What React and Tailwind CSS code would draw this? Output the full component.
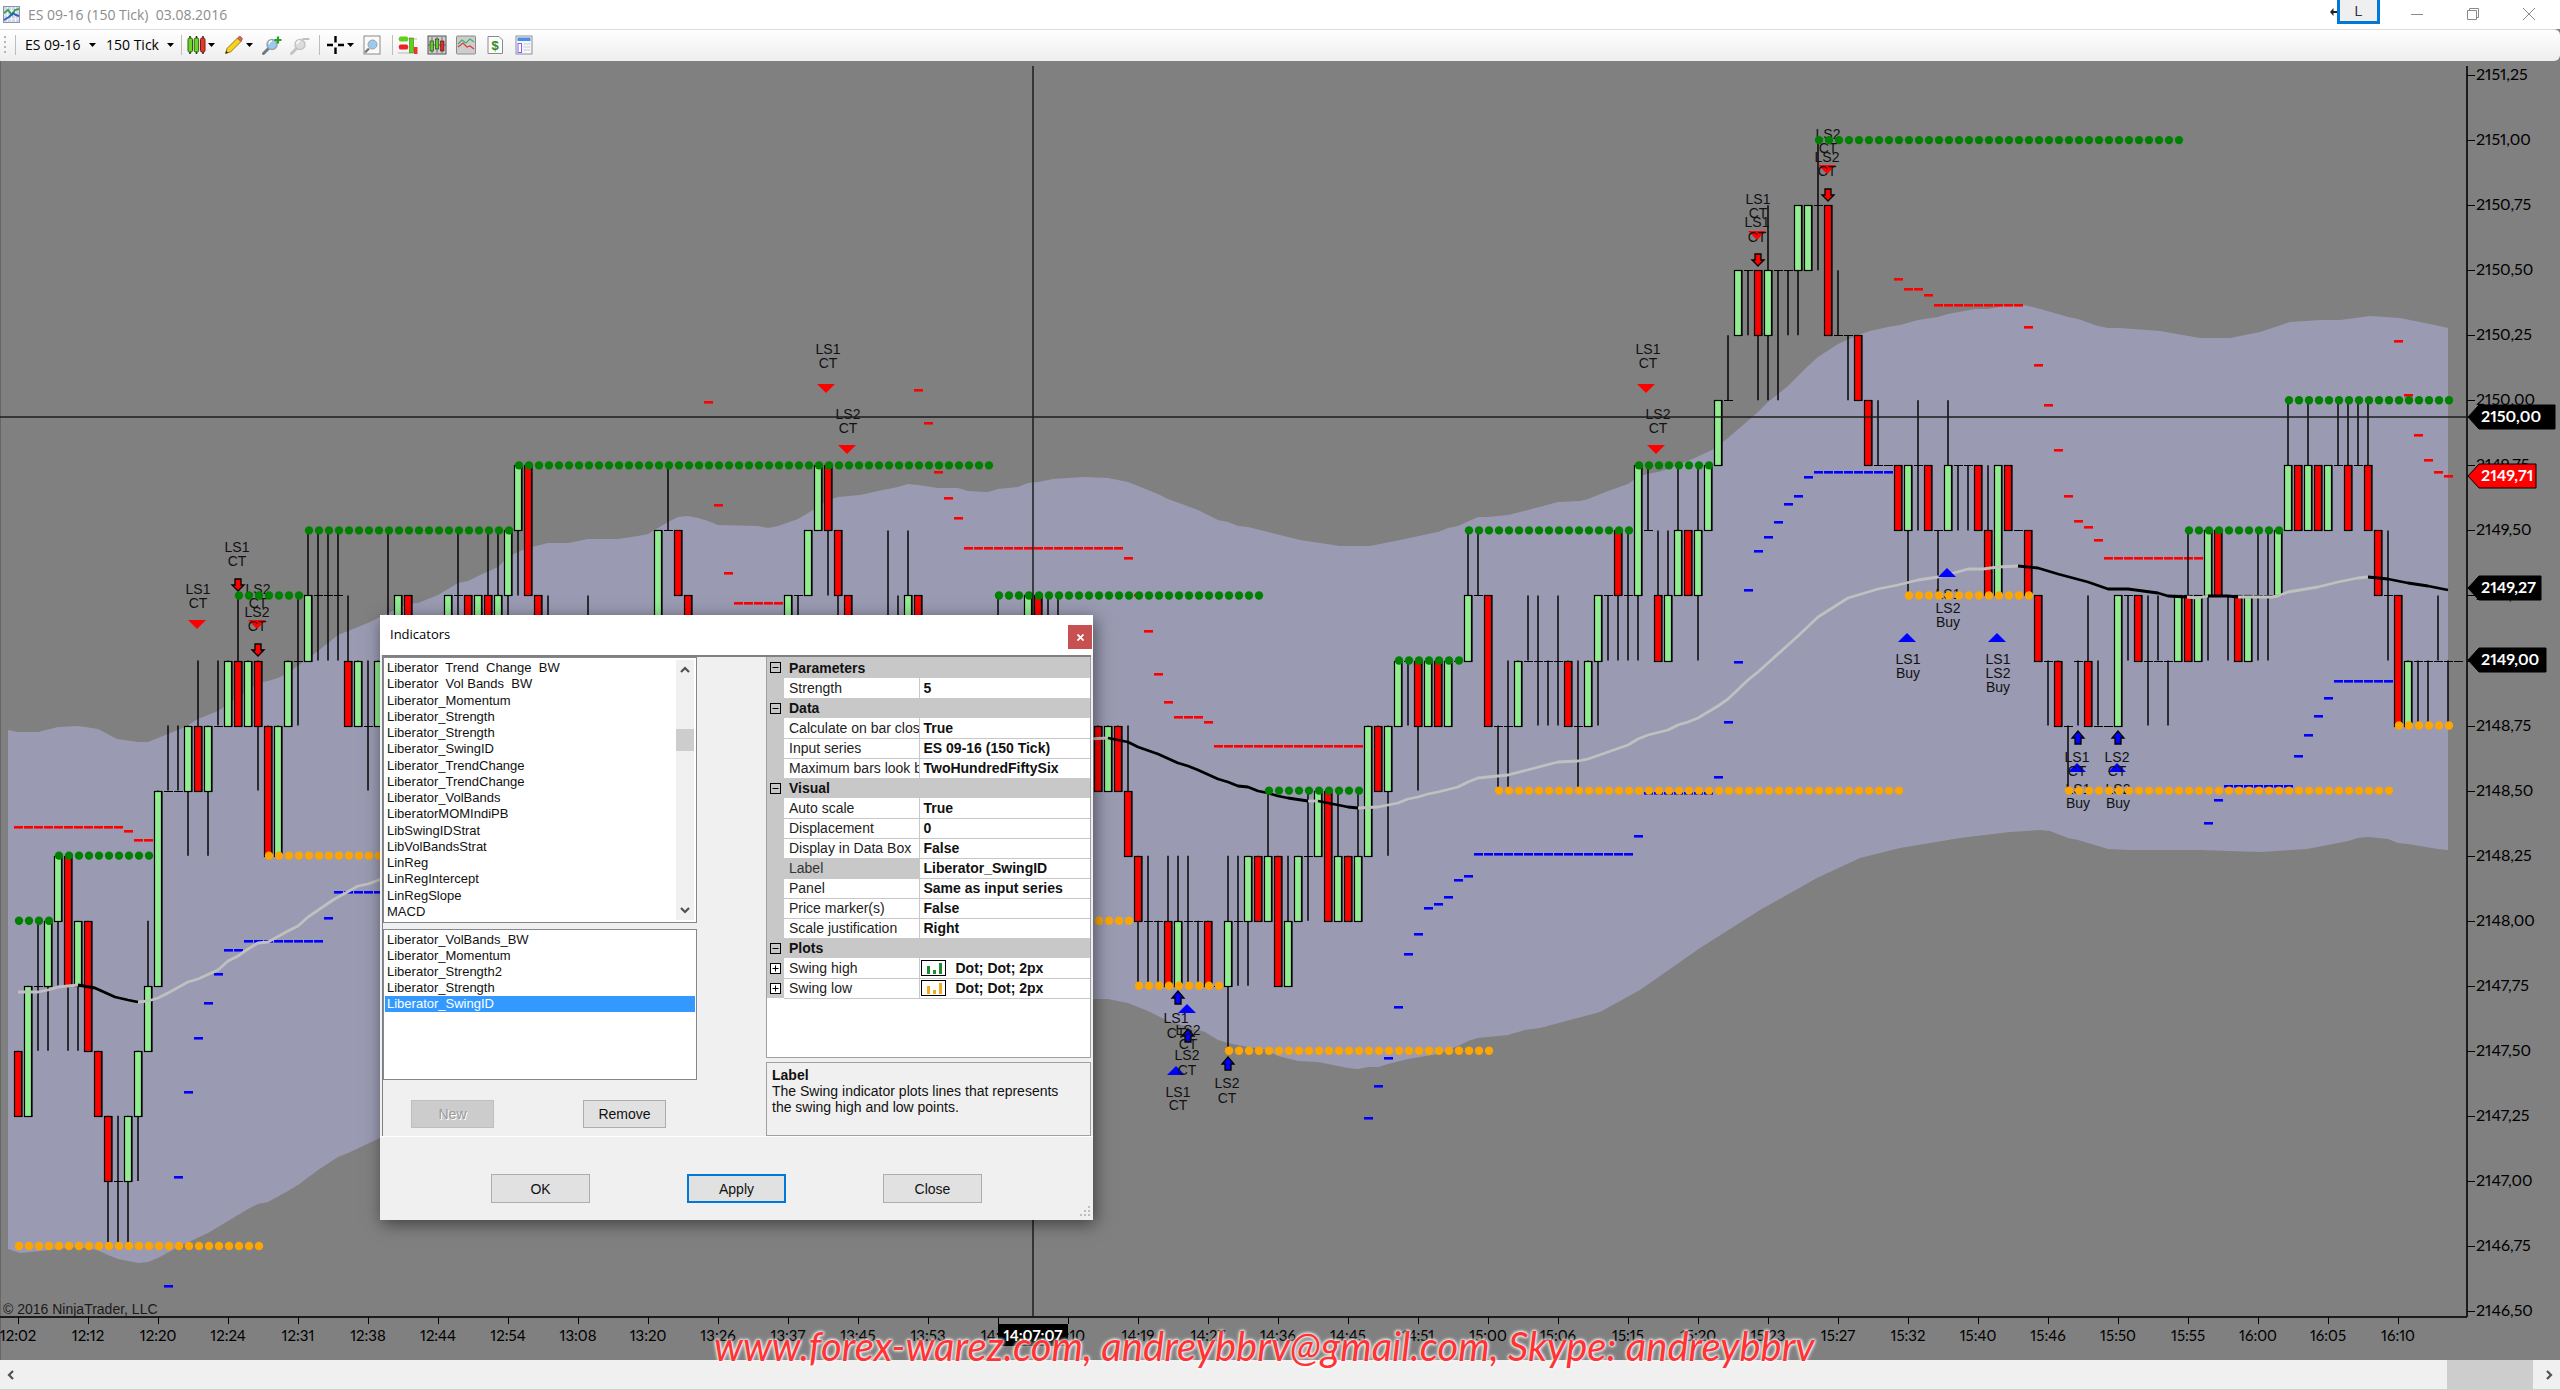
import React from "react";

const STEP = 10;
const X0 = 18;
const px = (i) => X0 + STEP * i;
const py = (level) => 1311 - 65.05 * level;

/* bar: [index, high, low, open, close] in quarter-point levels above 2146.50 */
const BARS = [
  [0, 4, 3, 4, 3], [1, 5, 3, 3, 5], [2, 6, 4, 5, 5], [3, 6, 4, 5, 6], [4, 7, 5, 6, 7], [5, 7, 4, 7, 5], [6, 6, 4, 5, 6],
  [7, 6, 4, 6, 4], [8, 4, 3, 4, 3], [9, 3, 1, 3, 2], [10, 3, 1, 2, 2], [11, 3, 1, 2, 3], [12, 4, 2, 3, 4], [13, 6, 4, 4, 5],
  [14, 8, 5, 5, 8], [15, 9, 8, 8, 8], [16, 9, 8, 8, 8], [17, 9, 7, 8, 9], [18, 10, 8, 9, 8], [19, 9, 7, 8, 9], [20, 10, 9, 9, 9],
  [21, 10, 9, 9, 10], [22, 11, 9, 10, 9], [23, 10, 9, 9, 10], [24, 10, 8, 10, 9], [25, 9, 7, 9, 7], [26, 9, 7, 7, 9],
  [27, 10, 9, 9, 10], [28, 11, 9, 10, 10], [29, 12, 10, 10, 11], [30, 12, 10, 11, 11], [31, 12, 10, 11, 11], [32, 12, 10, 11, 11],
  [33, 11, 9, 10, 9], [34, 10, 9, 9, 10], [35, 10, 8, 9, 9], [36, 10, 9, 9, 10], [37, 12, 9, 10, 10], [38, 11, 10, 10, 11],
  [39, 11, 10, 11, 10], [43, 11, 10, 10, 11], [44, 12, 10, 11, 11], [45, 11, 10, 11, 10], [46, 11, 10, 10, 11],
  [47, 12, 10, 11, 10], [48, 12, 10, 10, 11], [49, 12, 10, 11, 12], [50, 13, 11, 12, 13], [51, 13, 11, 13, 11], [52, 11, 10, 11, 10],
  [53, 11, 10, 10, 10], [57, 11, 10, 10, 10], [64, 12, 10, 10, 12], [65, 13, 12, 12, 12], [66, 12, 11, 12, 11], [67, 11, 10, 11, 10],
  [77, 11, 10, 10, 11], [78, 11, 10, 11, 11], [79, 12, 11, 11, 12], [80, 13, 12, 12, 13], [81, 13, 11, 13, 12], [82, 12, 10, 12, 11],
  [83, 11, 10, 11, 10], [87, 12, 10, 10, 10], [88, 11, 10, 10, 10], [89, 12, 10, 10, 11], [90, 11, 10, 11, 10], [98, 11, 10, 10, 10],
  [101, 11, 10, 10, 11], [102, 11, 10, 11, 10], [103, 11, 10, 10, 10], [104, 11, 10, 10, 10],
  [108, 9, 8, 9, 8], [109, 9, 8, 8, 9], [110, 9, 8, 9, 8], [111, 9, 7, 8, 7], [112, 7, 5, 7, 6], [113, 7, 5, 6, 6], [114, 6, 5, 6, 6],
  [115, 7, 5, 6, 5], [116, 7, 5, 5, 6], [117, 7, 5, 6, 6], [118, 6, 5, 6, 6], [119, 6, 5, 6, 5], [120, 5, 5, 5, 5], [121, 7, 4, 5, 6],
  [122, 7, 5, 6, 6], [123, 7, 5, 6, 7], [124, 7, 6, 7, 6], [125, 8, 6, 6, 7], [126, 7, 5, 7, 5], [127, 7, 5, 5, 6], [128, 7, 6, 6, 7],
  [129, 8, 6, 7, 7], [130, 8, 7, 7, 8], [131, 8, 6, 8, 6], [132, 8, 6, 6, 7], [133, 7, 6, 7, 6], [134, 8, 6, 6, 7], [135, 9, 7, 7, 9],
  [136, 9, 8, 9, 8], [137, 9, 7, 8, 9], [138, 10, 9, 9, 10], [139, 10, 9, 10, 10], [140, 10, 8, 10, 9], [141, 10, 9, 9, 10],
  [142, 10, 9, 10, 9], [143, 10, 9, 9, 10], [144, 10, 10, 10, 10], [145, 12, 10, 10, 11], [146, 12, 11, 11, 11], [147, 11, 9, 11, 9],
  [148, 9, 8, 9, 9], [149, 10, 8, 9, 9], [150, 10, 9, 9, 10], [151, 11, 10, 10, 10], [152, 11, 9, 10, 10], [153, 10, 9, 10, 10],
  [154, 11, 9, 10, 10], [155, 10, 9, 10, 9], [156, 10, 8, 9, 9], [157, 10, 9, 9, 10], [158, 11, 9, 10, 11], [159, 11, 10, 11, 11],
  [160, 12, 10, 12, 11], [161, 12, 10, 11, 11], [162, 13, 10, 11, 13], [163, 13, 12, 12, 12], [164, 12, 10, 11, 10],
  [165, 12, 10, 10, 11], [166, 13, 11, 11, 12], [167, 12, 11, 12, 11], [168, 13, 10, 11, 12], [169, 13, 12, 12, 13],
  [170, 14, 13, 13, 14], [171, 15, 14, 14, 14], [172, 16, 15, 15, 16], [173, 16, 15, 16, 16], [174, 16, 14, 16, 15],
  [175, 17, 14, 15, 16], [176, 16, 14, 16, 16], [177, 16, 15, 16, 16], [178, 17, 15, 16, 17], [179, 17, 16, 16, 17],
  [180, 18, 16, 17, 17], [181, 17, 15, 17, 15], [182, 16, 15, 15, 15], [183, 15, 14, 15, 15], [184, 15, 14, 15, 14],
  [185, 14, 13, 14, 13], [186, 14, 13, 13, 13], [187, 13, 13, 13, 13], [188, 13, 12, 13, 12], [189, 13, 11, 12, 13],
  [190, 14, 12, 13, 13], [191, 13, 12, 13, 12], [192, 12, 11, 12, 12], [193, 14, 12, 12, 13], [194, 13, 12, 13, 13],
  [195, 13, 12, 13, 13], [196, 13, 12, 13, 12], [197, 13, 11, 12, 11], [198, 13, 11, 11, 13], [199, 13, 12, 13, 12],
  [200, 12, 12, 12, 12], [201, 12, 11, 12, 11], [202, 11, 10, 11, 10], [203, 10, 9, 10, 10], [204, 10, 9, 10, 9], [205, 9, 8, 9, 9],
  [206, 10, 9, 10, 10], [207, 11, 9, 10, 9], [208, 10, 9, 9, 9], [209, 9, 9, 9, 9], [210, 11, 9, 9, 11], [211, 11, 10, 11, 11],
  [212, 11, 10, 11, 10], [213, 11, 9, 10, 10], [214, 11, 10, 10, 10], [215, 10, 9, 10, 10], [216, 11, 10, 10, 11],
  [217, 12, 10, 11, 10], [218, 11, 10, 10, 11], [219, 12, 10, 11, 12], [220, 12, 11, 12, 11], [221, 11, 10, 11, 11],
  [222, 11, 10, 11, 10], [223, 11, 10, 10, 11], [224, 12, 10, 11, 11], [225, 12, 10, 11, 11], [226, 12, 11, 11, 12],
  [227, 14, 12, 12, 13], [228, 13, 12, 13, 12], [229, 14, 12, 12, 13], [230, 13, 12, 13, 12], [231, 13, 12, 12, 13],
  [232, 14, 13, 13, 13], [233, 14, 12, 13, 12], [234, 14, 13, 13, 13], [235, 14, 12, 13, 12], [236, 12, 11, 12, 11],
  [237, 12, 10, 11, 11], [238, 11, 9, 11, 9], [239, 10, 9, 9, 10], [240, 10, 9, 10, 10], [241, 10, 9, 10, 10],
  [242, 11, 10, 10, 10], [243, 10, 9, 10, 10], [244, 10, 10, 10, 10],
];

/* swing runs: [level, first index, last index] */
const SWING_HIGH = [
  [6, 0, 3], [7, 4, 13], [11, 22, 28], [12, 29, 49], [13, 50, 97], [11, 98, 124], [8, 125, 134], [10, 138, 144],
  [12, 145, 161], [13, 162, 169], [18, 180, 216], [12, 217, 226], [14, 227, 243],
];
const SWING_LOW = [
  [1, 0, 24], [7, 25, 40], [6, 100, 111], [5, 112, 120], [4, 121, 147], [8, 148, 188], [11, 189, 201], [8, 205, 237], [9, 238, 243],
];

/* stop dashes: [y, first index, last index] */
const STOP_RED = [
  [827, 0, 10], [831, 11, 11], [840, 12, 13], [402, 69, 69], [505, 70, 70], [573, 71, 71], [603, 72, 76], [390, 90, 90], [423, 91, 91],
  [472, 92, 92], [498, 93, 93], [518, 94, 94], [548, 95, 110], [558, 111, 111], [595, 112, 112], [631, 113, 113], [674, 114, 114],
  [702, 115, 115], [717, 116, 118], [722, 119, 119], [746, 120, 134], [279, 188, 188], [289, 189, 190], [295, 191, 191],
  [305, 192, 200], [327, 201, 201], [365, 202, 202], [405, 203, 203], [450, 204, 204], [496, 205, 205], [521, 206, 206],
  [527, 207, 207], [540, 208, 208], [558, 209, 218], [341, 238, 238], [395, 239, 239], [435, 240, 240], [460, 241, 241],
  [472, 242, 242], [476, 243, 243],
];
const STOP_BLUE = [
  [1286, 15, 15], [1177, 16, 16], [1092, 17, 17], [1038, 18, 18], [1003, 19, 19], [974, 20, 20], [950, 21, 22], [941, 23, 30],
  [918, 31, 31], [892, 32, 40], [1118, 135, 135], [1086, 136, 136], [1058, 137, 137], [1007, 138, 138], [954, 139, 139],
  [934, 140, 140], [908, 141, 141], [904, 142, 142], [897, 143, 143], [880, 144, 144], [876, 145, 145], [854, 146, 161],
  [836, 162, 162], [793, 163, 169], [777, 170, 170], [722, 171, 171], [662, 172, 172], [590, 173, 173], [551, 174, 174],
  [537, 175, 175], [522, 176, 176], [504, 177, 177], [496, 178, 178], [477, 179, 179], [472, 180, 187], [823, 219, 219],
  [800, 220, 220], [786, 221, 227], [756, 228, 228], [735, 229, 229], [716, 230, 230], [698, 231, 231], [681, 232, 237],
];

const BAND_TOP =
  "8,730 18,732 38,732 58,727 78,726 98,729 117,739 138,742 148,742 168,734 185,727 198,719 218,711 247,691 258,683 268,681 278,678 288,673 318,651 338,635 348,631 370,622 388,613 408,604 418,603 438,595 458,583 468,581 478,576 498,567 508,557 518,552 528,548 548,543 568,543 588,539 618,539 638,536 648,534 658,528 668,522 678,517 688,516 698,518 708,521 718,525 758,526 768,528 778,526 798,519 818,507 828,500 838,497 860,495 878,491 898,487 908,484 918,485 938,488 958,488 968,491 988,492 998,489 1018,487 1028,483 1038,482 1053,479 1083,477 1108,478 1128,482 1158,494 1168,499 1198,510 1218,520 1228,522 1238,526 1248,527 1260,530 1300,540 1340,546 1370,546 1400,540 1428,534 1438,532 1448,528 1458,526 1478,517 1488,517 1508,515 1528,510 1558,502 1580,501 1588,499 1608,491 1628,484 1638,477 1647,474 1658,472 1668,469 1688,461 1712,450 1728,438 1758,412 1768,402 1788,386 1808,366 1818,357 1838,344 1858,335 1870,331 1888,327 1900,325 1918,320 1938,317 1948,314 1975,309 1988,309 2003,306 2023,305 2033,307 2058,314 2068,317 2078,319 2098,326 2108,328 2120,328 2160,331 2200,338 2230,338 2260,332 2290,322 2320,320 2340,320 2370,316 2400,318 2430,324 2448,328";
const BAND_BOTTOM =
  "2448,850 2438,849 2408,844 2398,843 2388,839 2378,838 2368,837 2358,838 2348,841 2328,845 2307,849 2260,852 2200,850 2130,850 2108,849 2088,843 2078,840 2068,838 2050,831 2040,830 2010,832 1960,838 1900,848 1860,858 1817,878 1760,910 1700,948 1640,990 1600,1012 1540,1028 1525,1030 1508,1035 1478,1038 1468,1041 1458,1046 1438,1054 1408,1059 1388,1064 1378,1067 1368,1067 1358,1069 1348,1068 1318,1062 1298,1061 1278,1056 1263,1049 1248,1047 1228,1043 1218,1040 1205,1032 1168,1021 1148,1011 1128,1003 1108,999 1093,999 900,1010 600,1050 380,1138 348,1153 338,1157 318,1170 298,1185 288,1191 268,1202 258,1204 248,1209 228,1221 208,1233 178,1247 158,1258 148,1262 138,1263 118,1259 108,1255 97,1250 78,1247 58,1249 40,1251 20,1253 8,1249";

const AVG_LIGHT = [
  "18,992 38,992 48,990 58,987 78,985",
  "138,1002 148,1001 158,998 168,993 188,982 198,979 218,970 228,961 238,956 248,949 258,943 268,942 288,931 298,926 308,917 333,900 358,886 368,884 384,878",
  "1088,739 1108,738",
  "1308,801 1318,801",
  "1358,808 1378,807 1398,803 1408,799 1418,797 1428,794 1438,792 1458,787 1468,782 1478,778 1508,775 1558,762 1578,761 1588,759 1608,752 1628,745 1638,739 1648,735 1668,730 1678,725 1688,722 1698,718 1718,706 1728,699 1748,680 1758,672 1788,645 1798,636 1818,617 1848,598 1858,595 1878,589 1898,585 1918,580 1938,577 1950,574 1968,569 1983,569 1998,567 2018,566",
  "2187,597 2198,598 2208,596",
  "2238,597 2272,597 2278,596 2288,592 2318,587 2338,582 2358,578 2368,577",
];
const AVG_DARK = [
  "78,985 95,988 115,997 128,1000 138,1002",
  "1108,738 1118,740 1128,742 1138,747 1158,754 1178,763 1188,766 1198,770 1218,779 1228,782 1238,786 1248,787 1258,791 1268,793 1278,796 1288,798 1308,801",
  "1318,801 1328,803 1338,805 1348,807 1358,808",
  "2018,566 2038,568 2048,571 2058,574 2088,582 2108,589 2128,589 2158,593 2168,596 2187,597",
  "2208,596 2228,596 2238,597",
  "2368,577 2388,579 2408,583 2428,586 2448,590",
];

/* signal labels: [text, centre x, centre y] */
const LABELS = [
  ["LS1", 198, 589], ["CT", 198, 603], ["LS1", 237, 547], ["CT", 237, 561], ["LS2", 258, 589], ["CT", 258, 603],
  ["LS2", 257, 612], ["CT", 257, 626], ["LS1", 828, 349], ["CT", 828, 363], ["LS2", 848, 414], ["CT", 848, 428],
  ["LS1", 1648, 349], ["CT", 1648, 363], ["LS2", 1658, 414], ["CT", 1658, 428], ["LS1", 1758, 199], ["CT", 1758, 213],
  ["LS1", 1757, 222], ["CT", 1757, 237], ["LS2", 1828, 134], ["CT", 1828, 148], ["LS2", 1827, 157], ["CT", 1827, 171],
  ["LS1", 1948, 594], ["LS2", 1948, 608], ["Buy", 1948, 622], ["LS1", 1908, 659], ["Buy", 1908, 673], ["LS1", 1998, 659],
  ["LS2", 1998, 673], ["Buy", 1998, 687], ["LS1", 2077, 757], ["CT", 2077, 771], ["LS1", 2078, 789], ["Buy", 2078, 803],
  ["LS2", 2117, 757], ["CT", 2117, 771], ["LS2", 2118, 789], ["Buy", 2118, 803], ["LS1", 1176, 1018], ["CT", 1176, 1033],
  ["LS2", 1188, 1030], ["CT", 1188, 1044], ["LS2", 1187, 1055], ["CT", 1187, 1070], ["LS1", 1178, 1092], ["CT", 1178, 1105],
  ["LS2", 1227, 1083], ["CT", 1227, 1098],
];
const TRI_DOWN = [[197, 620], [257, 620], [826, 384], [847, 445], [1646, 384], [1656, 445], [1757, 231], [1827, 165]];
const TRI_UP = [[1947, 577], [1907, 642], [1997, 642], [2077, 772], [2117, 772], [1187, 1013], [1176, 1075]];
const ARROW_DOWN = [[238, 591], [258, 656], [1758, 266], [1828, 201]];
const ARROW_UP = [[2078, 731], [2118, 731], [1178, 991], [1188, 1029], [1228, 1057]];

const TIMES = "12:02 12:12 12:20 12:24 12:31 12:38 12:44 12:54 13:08 13:20 13:26 13:37 13:45 13:53 14:01 14:10 14:19 14:27 14:36 14:45 14:51 15:00 15:06 15:15 15:20 15:23 15:27 15:32 15:40 15:46 15:50 15:55 16:00 16:05 16:10".split(" ");

const priceText = (level) => (2146.5 + level * 0.25).toFixed(2).replace(".", ",");

function Candle({ bar }) {
  const [i, high, low, open, close] = bar;
  const x = px(i);
  const top = Math.round(py(Math.max(open, close)));
  const bottom = Math.round(py(Math.min(open, close)));
  return (
    <g>
      {high !== low && <line x1={x} x2={x} y1={py(high)} y2={py(low)} stroke="#000" strokeOpacity="0.72" strokeWidth="2" />}
      {open === close ? (
        <line x1={x - 4} x2={x + 5} y1={top + 0.5} y2={top + 0.5} stroke="#000" strokeWidth="1" />
      ) : (
        <>
          <rect x={x + 3} y={top} width="2" height={bottom - top + 1} fill="#000" fillOpacity="0.6" />
          <rect x={x - 3.5} y={top + 0.5} width="7" height={bottom - top} fill={close > open ? "#90ee90" : "#ff0000"} stroke="#000" strokeWidth="1.2" />
        </>
      )}
    </g>
  );
}

function Dots({ runs, color }) {
  return runs.map(([level, a, b]) =>
    Array.from({ length: b - a + 1 }, (_, k) => (
      <circle key={level + "-" + (a + k)} cx={px(a + k) + 1} cy={py(level)} r="4.2" fill={color} />
    ))
  );
}

function Dashes({ runs, color }) {
  return runs.map(([y, a, b]) =>
    Array.from({ length: b - a + 1 }, (_, k) => (
      <rect key={y + "-" + (a + k)} x={px(a + k) - 4} y={y - 1} width="9" height="2.6" fill={color} />
    ))
  );
}

function PriceTag({ y, right, fill, children }) {
  return (
    <g>
      <path d={`M2468 ${y} L2479 ${y - 12} H${right} V${y + 12} H2479 Z`} fill={fill} stroke="#000" />
      <text x="2481" y={y + 5} fontSize="16" fontWeight="700" fill="#fff" className="font-['Lato',sans-serif] proportional-nums">
        {children}
      </text>
    </g>
  );
}

function Chart() {
  return (
    <svg viewBox="0 61 2560 1299" className="block h-full w-full" role="img" aria-label="ES 09-16 150 tick price chart">
      <rect x="0" y="61" width="2560" height="1299" fill="#808080" />
      <rect x="0" y="61" width="1" height="1299" fill="#666" />
      <polygon points={BAND_TOP + " " + BAND_BOTTOM} fill="#9a9ab2" />
      <Dashes runs={STOP_RED} color="#ff0000" />
      {BARS.map((b) => (
        <Candle key={b[0]} bar={b} />
      ))}
      <Dashes runs={STOP_BLUE} color="#0000ff" />
      <g fill="none" strokeWidth="2.8" strokeLinejoin="round">
        {AVG_LIGHT.map((p) => (
          <polyline key={p} points={p} stroke="#c0c0c0" />
        ))}
        {AVG_DARK.map((p) => (
          <polyline key={p} points={p} stroke="#000" />
        ))}
      </g>
      {ARROW_DOWN.map(([x, y]) => (
        <path key={x + "d" + y} d={`M${x} ${y} l-6 -6 h3 v-6 h6 v6 h3 z`} fill="#f00" stroke="#000" strokeWidth="1.3" />
      ))}
      {ARROW_UP.map(([x, y]) => (
        <path key={x + "u" + y} d={`M${x} ${y} l-6 7 h3 v6 h6 v-6 h3 z`} fill="#00f" stroke="#000" strokeWidth="1.3" />
      ))}
      {TRI_DOWN.map(([x, y]) => (
        <path key={x + "t" + y} d={`M${x - 9} ${y} h18 l-9 9 z`} fill="#f00" />
      ))}
      {TRI_UP.map(([x, y]) => (
        <path key={x + "t" + y} d={`M${x - 9} ${y} h18 l-9 -9 z`} fill="#00f" />
      ))}
      <g fontSize="14" textAnchor="middle" fill="#111" className="font-['Liberation_Sans',Arial,sans-serif]">
        {LABELS.map(([t, x, y]) => (
          <text key={t + x + "-" + y} x={x} y={y + 5}>
            {t}
          </text>
        ))}
      </g>
      <Dots runs={SWING_LOW} color="#ffa500" />
      <Dots runs={SWING_HIGH} color="#008000" />

      <g stroke="#1c1c1c">
        <line x1="0" x2="2467" y1="417" y2="417" strokeWidth="1.5" />
        <line x1="1033" x2="1033" y1="66" y2="1317" strokeWidth="1.5" />
        <line x1="2467" x2="2467" y1="66" y2="1317" strokeWidth="2" />
        <line x1="0" x2="2467" y1="1317" y2="1317" strokeWidth="2" />
      </g>
      <g fontSize="16" fill="#000" className="font-['Lato',sans-serif] proportional-nums">
        {Array.from({ length: 20 }, (_, l) => (
          <g key={l}>
            <rect x="2467" y={Math.round(py(l))} width="8" height="1" />
            <text x="2476" y={Math.round(py(l)) + 5}>
              {priceText(l)}
            </text>
          </g>
        ))}
        {TIMES.map((t, k) => (
          <g key={t}>
            <rect x={px(k * 7)} y="1317" width="1" height="7" />
            <text x={px(k * 7)} y="1341" fontSize="15" textAnchor="middle">
              {t}
            </text>
          </g>
        ))}
      </g>
      <PriceTag y={417} right={2555} fill="#000">2150,00</PriceTag>
      <PriceTag y={476} right={2536} fill="#f00">2149,71</PriceTag>
      <PriceTag y={588} right={2541} fill="#000">2149,27</PriceTag>
      <PriceTag y={660} right={2546} fill="#000">2149,00</PriceTag>
      <rect x="998" y="1324" width="70" height="22" fill="#000" />
      <text x="1033" y="1341" fontSize="15" fontWeight="700" textAnchor="middle" fill="#fff" className="font-['Lato',sans-serif] proportional-nums">
        14:07:07
      </text>
      <text x="3" y="1314" fontSize="14" fill="#1a1a1a" className="font-['Liberation_Sans',Arial,sans-serif]">
        © 2016 NinjaTrader, LLC
      </text>
    </svg>
  );
}

function Caret() {
  return (
    <svg viewBox="0 0 7 4" className="h-1 w-[7px] shrink-0">
      <path d="M0 0h7L3.500 4z" fill="#000" />
    </svg>
  );
}

function ToolIcon({ children, label }) {
  return (
    <svg viewBox="0 0 20 20" className="h-5 w-5 shrink-0" aria-label={label}>
      {children}
    </svg>
  );
}

function Divider() {
  return <div className="h-5 w-px shrink-0 bg-[#bdbdbd]" />;
}

function Magnifier({ lens, rim, handle }) {
  return (
    <>
      <path d="M1.500 18.500 7 13" stroke={handle} strokeWidth="3" strokeLinecap="round" />
      <circle cx="10" cy="9.500" r="5" fill={lens} stroke={rim} strokeWidth="1.500" />
      <path d="M7 9a3 3 0 0 1 3-3" fill="none" stroke="#fff" strokeWidth="1.300" />
    </>
  );
}

function Toolbar() {
  return (
    <div className="flex h-8 shrink-0 items-center rounded-r-md border-t border-[#dcdcdc] bg-linear-to-b from-white to-[#eeeeee] pb-0.5 pl-1 font-['Open_Sans',sans-serif] text-sm text-black">
      <div className="flex w-[11px] flex-col gap-[3px]">
        <i className="h-0.5 w-0.5 bg-[#b5b5b5]" />
        <i className="h-0.5 w-0.5 bg-[#b5b5b5]" />
        <i className="h-0.5 w-0.5 bg-[#b5b5b5]" />
        <i className="h-0.5 w-0.5 bg-[#b5b5b5]" />
      </div>
      <Divider />
      <button className="ml-[9px] flex w-[81px] items-center gap-2 whitespace-nowrap"><span>ES 09-16</span><Caret /></button>
      <button className="flex w-[75px] items-center gap-2 whitespace-nowrap"><span>150 Tick</span><Caret /></button>
      <Divider />
      <button className="ml-1 flex w-[38px] items-center gap-0.5" aria-label="Chart style">
        <ToolIcon>
          <path d="M4 1v18M10.500 1v18M17 1v18" stroke="#222" strokeWidth="1.500" />
          <rect x="2" y="3" width="4.500" height="14" rx="1.500" fill="#6fd22a" stroke="#2a5c10" />
          <rect x="8.200" y="3" width="4.500" height="14" rx="1.500" fill="#6fd22a" stroke="#2a5c10" />
          <rect x="14.500" y="3" width="4.500" height="14" rx="1.500" fill="#e8362c" stroke="#7a1a14" />
        </ToolIcon>
        <Caret />
      </button>
      <button className="flex w-[38px] items-center gap-0.5" aria-label="Drawing tools">
        <ToolIcon>
          <path d="M1.500 18.500 3 13.500 13.500 3l3.500 3.500L6.500 17z" fill="#f7d31d" stroke="#8d6d11" strokeWidth="0.900" />
          <path d="M13.500 3l1.800-1.600c.8-.6 3.300 1.700 2.900 2.800L17 6.500z" fill="#e2655c" stroke="#914039" strokeWidth="0.700" />
          <path d="M1.500 18.500l.8-2.700 1.800 1.900z" fill="#222" />
        </ToolIcon>
        <Caret />
      </button>
      <button className="w-7" aria-label="Zoom in">
        <ToolIcon>
          <Magnifier lens="#9cc9ee" rim="#9aa3ab" handle="#6f7a86" />
          <path d="M16 1.500v7M12.500 5h7" stroke="#22a422" strokeWidth="2.200" />
        </ToolIcon>
      </button>
      <button className="w-[29px]" aria-label="Zoom out" disabled>
        <ToolIcon>
          <Magnifier lens="#dcdcdc" rim="#c4c4c4" handle="#c4c4c4" />
          <path d="M12.500 4h7" stroke="#c0c0c0" strokeWidth="2" />
        </ToolIcon>
      </button>
      <Divider />
      <button className="ml-[5px] flex w-[37px] items-center gap-0.5" aria-label="Crosshair">
        <ToolIcon>
          <path d="M10.500 1v6.500M10.500 12.500V19M2 10h6M13 10h6" stroke="#000" strokeWidth="2.400" />
        </ToolIcon>
        <Caret />
      </button>
      <button className="w-[30px]" aria-label="Data box">
        <ToolIcon>
          <rect x="2" y="1" width="16" height="18" fill="#fafafa" stroke="#8a8a8a" />
          <path d="M3 17.500 7 13.500" stroke="#6f7a86" strokeWidth="2.400" />
          <circle cx="10.500" cy="9.500" r="4.500" fill="#9cc9ee" stroke="#9aa3ab" />
        </ToolIcon>
      </button>
      <Divider />
      <div className="ml-[5px] flex items-center gap-[9px]">
        <button aria-label="Chart trader">
          <ToolIcon>
            <path d="M0 4h19M0 12h11M0 18h11" stroke="#b9b9b9" />
            <rect x="1" y="1.500" width="9" height="5" rx="1.500" fill="#62cf1f" />
            <rect x="1" y="9.500" width="9" height="5" rx="1.500" fill="#e22" />
            <rect x="11.500" y="3" width="4" height="15" fill="#62cf1f" stroke="#3c7f14" strokeWidth="0.600" />
            <rect x="16" y="12" width="3.500" height="7" fill="#e33" />
          </ToolIcon>
        </button>
        <button aria-label="Data series">
          <ToolIcon>
            <rect x="1" y="1" width="18" height="18" fill="#cfcfcf" stroke="#555" />
            <path d="M5 2v16M10 2v16M15 2v16M1 10h18" stroke="#555" strokeWidth="0.800" />
            <rect x="3" y="6" width="3.500" height="10" fill="#5fcc22" stroke="#222" strokeWidth="0.600" />
            <rect x="8.300" y="4" width="3.500" height="10" fill="#5fcc22" stroke="#222" strokeWidth="0.600" />
            <rect x="13.500" y="6" width="3.500" height="10" fill="#e22" stroke="#222" strokeWidth="0.600" />
          </ToolIcon>
        </button>
        <button aria-label="Indicators">
          <ToolIcon>
            <rect x="0.500" y="1" width="19" height="18" rx="1" fill="#cdcdcd" stroke="#8c8c8c" />
            <path d="M2 9l4-4 4 3 4-4 4 3" fill="none" stroke="#3ab56b" strokeWidth="1.200" />
            <path d="M2 12l5-4 4 4 3-1 4 3" fill="none" stroke="#e03a3a" strokeWidth="1.200" />
          </ToolIcon>
        </button>
        <button aria-label="Strategies">
          <ToolIcon>
            <path d="M3 1.500h11l3.500 3.500v13.500H3z" fill="#fcfcfc" stroke="#8a8a8a" />
            <text x="10" y="15" fontSize="13" fontWeight="700" fill="#2c8a1f" textAnchor="middle" className="font-['Liberation_Sans',sans-serif]">$</text>
          </ToolIcon>
        </button>
        <button aria-label="Properties">
          <ToolIcon>
            <rect x="2" y="1" width="16" height="18" fill="#f4f7fb" stroke="#8a8f99" />
            <rect x="3.500" y="2.500" width="13" height="3.500" fill="#4a90e2" />
            <rect x="4" y="8.500" width="3.500" height="9" fill="#fff" stroke="#8b5cf6" />
            <path d="M9.500 9h7M9.500 12h7M9.500 15h7" stroke="#c9ced6" />
          </ToolIcon>
        </button>
      </div>
    </div>
  );
}

function TitleBar() {
  return (
    <header className="flex h-[29px] shrink-0 items-center bg-white pl-[3px] font-['Open_Sans',sans-serif] text-[#8c8c8c]">
      <svg viewBox="0 0 17 17" className="h-[17px] w-[17px]">
        <rect x="0.500" y="0.500" width="16" height="16" fill="#d3d5ea" stroke="#8f92a8" />
        <path d="M4.500 1v15M8.500 1v15M12.500 1v15M1 5h15M1 9h15M1 13h15" stroke="#fff" strokeWidth="0.700" />
        <path d="M1 7l4-3 4 5 3-5 4-1" fill="none" stroke="#2fa84a" strokeWidth="2" />
        <path d="M1 14l5-3 4-4 3 2 3 1" fill="none" stroke="#2c62b8" strokeWidth="2" />
      </svg>
      <h1 className="ml-2 text-sm whitespace-pre">ES 09-16 (150 Tick)  03.08.2016</h1>
      <div className="ml-auto flex h-full items-start">
        <svg viewBox="0 0 7 8" className="mt-2 h-2 w-[7px]">
          <path d="M0 4l3.500-4v3H7v2H3.500v3z" fill="#222" />
        </svg>
        <button className="h-6 w-[43px] border-3 border-t-0 border-[#0078d7] bg-[#efefef] font-['Liberation_Sans',sans-serif] text-sm text-[#334]">L</button>
        <button className="ml-[25px] flex h-[27px] w-[23px] items-center justify-center" aria-label="Minimize">
          <svg viewBox="0 0 12 12" className="h-3 w-3"><path d="M0 6.500h12" stroke="#8a8a8a" /></svg>
        </button>
        <button className="ml-[33px] flex h-[27px] w-[23px] items-center justify-center" aria-label="Restore">
          <svg viewBox="0 0 12 12" className="h-3 w-3"><path d="M.5 2.500h9v9h-9zM2.500 2.500v-2h9v9h-2" fill="none" stroke="#8a8a8a" /></svg>
        </button>
        <button className="mr-5 ml-[33px] flex h-[27px] w-[23px] items-center justify-center" aria-label="Close window">
          <svg viewBox="0 0 12 12" className="h-3 w-3"><path d="M0 0l12 12M12 0L0 12" stroke="#8a8a8a" /></svg>
        </button>
      </div>
    </header>
  );
}

const AVAILABLE = [
  "Liberator  Trend  Change  BW", "Liberator  Vol Bands  BW", "Liberator_Momentum", "Liberator_Strength", "Liberator_Strength",
  "Liberator_SwingID", "Liberator_TrendChange", "Liberator_TrendChange", "Liberator_VolBands", "LiberatorMOMIndiPB",
  "LibSwingIDStrat", "LibVolBandsStrat", "LinReg", "LinRegIntercept", "LinRegSlope", "MACD",
];
const APPLIED = ["Liberator_VolBands_BW", "Liberator_Momentum", "Liberator_Strength2", "Liberator_Strength", "Liberator_SwingID"];

const PROPS = [
  ["Parameters"], ["Strength", "5"],
  ["Data"], ["Calculate on bar close", "True"], ["Input series", "ES 09-16 (150 Tick)"], ["Maximum bars look back", "TwoHundredFiftySix"],
  ["Visual"], ["Auto scale", "True"], ["Displacement", "0"], ["Display in Data Box", "False"], ["Label", "Liberator_SwingID"],
  ["Panel", "Same as input series"], ["Price marker(s)", "False"], ["Scale justification", "Right"],
  ["Plots"], ["Swing high", "Dot; Dot; 2px", "#1e8c2e"], ["Swing low", "Dot; Dot; 2px", "#f5a623"],
];

function Expander({ plus }) {
  return (
    <svg viewBox="0 0 11 11" className="ml-[3px] block h-[11px] w-[11px]">
      <rect x="0.500" y="0.500" width="10" height="10" fill={plus ? "#fff" : "#c8c8c8"} stroke="#000" />
      <path d={plus ? "M2.500 5.500h6M5.500 2.500v6" : "M2.500 5.500h6"} stroke="#000" />
    </svg>
  );
}

function PropertyGrid() {
  return (
    <div className="h-[401px] border border-t-0 border-[#a0a0a0] bg-white">
      <table className="w-full table-fixed border-collapse text-sm leading-none">
        <colgroup>
          <col className="w-[17px]" />
          <col className="w-[135px]" />
          <col />
        </colgroup>
        <tbody>
          {PROPS.map(([name, value, color], k) =>
            value === undefined ? (
              <tr key={name} className={k === 0 ? "h-[21px] bg-[#c8c8c8]" : "h-5 bg-[#c8c8c8]"}>
                <td className="p-0"><Expander /></td>
                <th colSpan="2" scope="colgroup" className="p-0 pl-[5px] text-left font-bold">{name}</th>
              </tr>
            ) : (
              <tr key={name} className="h-5">
                <td className="bg-[#c8c8c8] p-0">{color && <Expander plus />}</td>
                <th
                  scope="row"
                  className={
                    name === "Label"
                      ? "overflow-hidden border-r border-b border-[#c8c8c8] bg-[#c8c8c8] p-0 pl-[5px] text-left font-normal whitespace-nowrap text-[#333]"
                      : "overflow-hidden border-r border-b border-[#c8c8c8] p-0 pl-[5px] text-left font-normal whitespace-nowrap text-[#222]"
                  }
                >
                  {name}
                </th>
                <td className="border-b border-[#c8c8c8] p-0 pl-1 font-bold whitespace-nowrap">
                  {color ? (
                    <span className="flex items-center gap-2.5">
                      <svg viewBox="0 0 25 16" className="-ml-[3px] h-4 w-[25px]">
                        <rect x="0.500" y="0.500" width="24" height="15" fill="#fff" stroke="#000" />
                        <path d="M7.500 14V6M13.500 14v-4M19.500 14V3" stroke={color} strokeWidth="3" />
                      </svg>
                      {value}
                    </span>
                  ) : (
                    value
                  )}
                </td>
              </tr>
            )
          )}
        </tbody>
      </table>
    </div>
  );
}

function Chevron({ d }) {
  return (
    <svg viewBox="0 0 10 10" className="h-2.5 w-2.5">
      <path d={d} fill="none" stroke="#505050" strokeWidth="2.200" />
    </svg>
  );
}

function Dialog() {
  return (
    <section
      role="dialog"
      aria-label="Indicators"
      className="absolute top-[615px] left-[380px] flex w-[713px] flex-col bg-[#f0f0f0] font-['Liberation_Sans',Arial,sans-serif] text-[13px] text-[#111] shadow-[2px_4px_16px_rgba(0,0,0,0.5)]"
    >
      <div className="flex h-10 items-center bg-white pr-px pl-[10px]">
        <h2 className="font-['Open_Sans',sans-serif] text-[13px] text-black">Indicators</h2>
        <button className="mt-1 ml-auto flex h-6 w-6 items-center justify-center bg-[#c75050]" aria-label="Close dialog">
          <svg viewBox="0 0 8 8" className="h-[7px] w-[7px]"><path d="M.5.5l7 7M7.500.5l-7 7" stroke="#fff" strokeWidth="2" /></svg>
        </button>
      </div>
      <div className="mx-0.5 flex h-[481px] justify-between border-t-2 border-l border-[#808080]">
        <div className="w-[314px]">
          <div className="flex h-[266px] border border-[#828790] bg-white">
            <ul role="listbox" aria-label="Available indicators" className="flex grow flex-col justify-between py-0.5 pl-[3px]">
              {AVAILABLE.map((t, k) => (
                <li key={k} role="option" aria-selected="false" className="leading-4 whitespace-pre">{t}</li>
              ))}
            </ul>
            <div className="m-0.5 flex w-[18px] flex-col items-center bg-[#f0f0f0] py-1">
              <button aria-label="Scroll up" className="flex h-3 items-center"><Chevron d="M1 7l4-4 4 4" /></button>
              <div className="mt-[53px] h-[22px] w-full bg-[#cdcdcd]" />
              <button aria-label="Scroll down" className="mt-auto flex h-3 items-center"><Chevron d="M1 3l4 4 4-4" /></button>
            </div>
          </div>
          <ul role="listbox" aria-label="Applied indicators" className="mt-1.5 h-[151px] border border-[#828790] bg-white px-px py-0.5">
            {APPLIED.map((t) => (
              <li
                key={t}
                role="option"
                aria-selected={t === "Liberator_SwingID"}
                className={t === "Liberator_SwingID" ? "bg-[#3399ff] pl-0.5 leading-4 text-white" : "pl-0.5 leading-4"}
              >
                {t}
              </li>
            ))}
          </ul>
          <div className="mt-5 flex justify-between pr-[31px] pl-[28px] text-sm">
            <button disabled className="h-7 w-[83px] border border-[#bfbfbf] bg-[#cccccc] text-[#9b9b9b] [text-shadow:1px_1px_#fff]">New</button>
            <button className="h-7 w-[83px] border border-[#adadad] bg-[#e1e1e1]">Remove</button>
          </div>
        </div>
        <div className="flex w-[325px] flex-col gap-1">
          <PropertyGrid />
          <div className="h-[74px] border border-[#a0a0a0] px-[5px] pt-1 text-sm leading-4">
            <h3 className="font-bold">Label</h3>
            <p>The Swing indicator plots lines that represents<br />the swing high and low points.</p>
          </div>
        </div>
      </div>
      <div className="relative flex h-[84px] items-start justify-between border-t border-white px-[111px] pt-[37px] text-sm">
        <button className="h-[29px] w-[99px] border border-[#adadad] bg-[#e1e1e1]">OK</button>
        <button className="h-[29px] w-[99px] border-2 border-[#0078d7] bg-[#e1e1e1]">Apply</button>
        <button className="h-[29px] w-[99px] border border-[#adadad] bg-[#e1e1e1]">Close</button>
        <svg viewBox="0 0 12 12" className="absolute right-0.5 bottom-0.5 h-3 w-3">
          <path d="M9 0h2v2H9zM5 4h2v2H5zM9 4h2v2H9zM1 8h2v2H1zM5 8h2v2H5zM9 8h2v2H9z" fill="#bdbdbd" />
        </svg>
      </div>
    </section>
  );
}

export default function App() {
  return (
    <div className="relative flex h-screen w-full flex-col overflow-hidden bg-[#808080]">
      <TitleBar />
      <Toolbar />
      <main className="min-h-0 grow">
        <Chart />
      </main>
      <div className="flex h-[30px] shrink-0 items-center border-b border-[#cfcfcf] bg-[#f0f0f0] px-[6px]">
        <button aria-label="Scroll left"><Chevron d="M7 1L3 5l4 4" /></button>
        <div className="mr-[11px] ml-auto h-[29px] w-[86px] bg-[#cdcdcd]" />
        <button aria-label="Scroll right"><Chevron d="M3 1l4 4-4 4" /></button>
      </div>
      <p className="absolute top-[1323px] left-[714px] font-['Lato',cursive] text-[40px] leading-[46px] whitespace-nowrap text-[#f33] italic [text-shadow:0_0_3px_#fff,0_0_3px_#fff,0_0_4px_#fff]">
        www.forex-warez.com, andreybbrv@gmail.com, Skype: andreybbrv
      </p>
      <Dialog />
    </div>
  );
}
